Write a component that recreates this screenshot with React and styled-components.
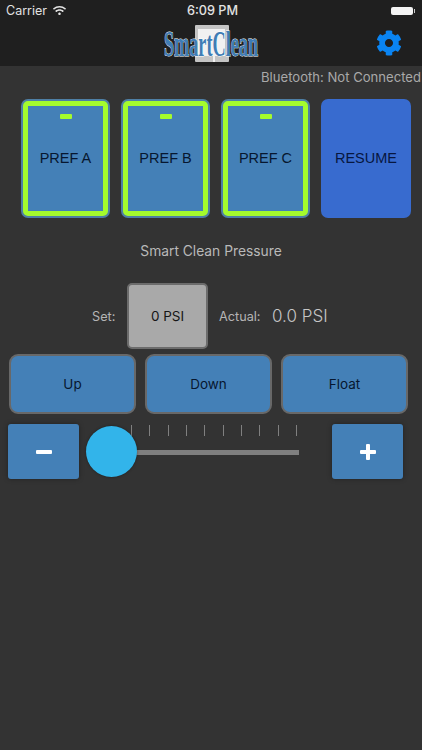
import React from "react";
import styled, { createGlobalStyle } from "styled-components";
import { FaCog, FaWifi } from "react-icons/fa";

const prefs = ["PREF A", "PREF B", "PREF C"];
const modes = ["Up", "Down", "Float"];
const ticks = Array.from({ length: 10 });

const Logo = () => (
  <LogoMark width="100" height="44" viewBox="0 0 100 44">
    <rect x="34" y="3" width="34" height="37" rx="1" fill="#c4c4c4" />
    <rect x="37" y="7" width="27" height="27" fill="#f1f1f1" />
    <rect x="52" y="28" width="2" height="12" fill="#f1f1f1" />
    <text
      x="3"
      y="34"
      textLength="94"
      lengthAdjust="spacingAndGlyphs"
      fontFamily="'Liberation Serif', serif"
      fontSize="36"
      fontWeight="700"
      fill="#3f7db5"
      stroke="#ffffff"
      strokeWidth="0.9"
      paintOrder="stroke"
    >
      SmartClean
    </text>
  </LogoMark>
);

const App = () => {
  return (
    <>
      <GlobalStyle />
      <Screen>
        <Header>
          <StatusBar>
            <Carrier>
              Carrier
              <FaWifi size={13} />
            </Carrier>
            <Clock>6:09 PM</Clock>
            <Battery />
          </StatusBar>
          <NavBar>
            <Logo />
            <GearButton>
              <FaCog size={26} />
            </GearButton>
          </NavBar>
        </Header>

        <Bluetooth>Bluetooth: Not Connected</Bluetooth>

        <PrefRow>
          {prefs.map((name) => (
            <PrefCard key={name}>
              <PrefInner>
                <PrefLed />
                {name}
              </PrefInner>
            </PrefCard>
          ))}
          <ResumeCard>RESUME</ResumeCard>
        </PrefRow>

        <Title>Smart Clean Pressure</Title>

        <PressureRow>
          <SetLabel>Set:</SetLabel>
          <SetBox>0 PSI</SetBox>
          <ActualLabel>Actual:</ActualLabel>
          <ActualValue>0.0 PSI</ActualValue>
        </PressureRow>

        <ModeRow>
          {modes.map((mode) => (
            <ModeButton key={mode}>{mode}</ModeButton>
          ))}
        </ModeRow>

        <SliderRow>
          <StepButton>
            <Minus />
          </StepButton>
          <Slider>
            <Ticks>
              {ticks.map((_, i) => (
                <Tick key={i} />
              ))}
            </Ticks>
            <Track />
            <Knob />
          </Slider>
          <StepButton>
            <Plus />
          </StepButton>
        </SliderRow>
      </Screen>
    </>
  );
};

export default App;

const GlobalStyle = createGlobalStyle`
  html, body {
    margin: 0;
    padding: 0;
    background: #333333;
  }
`;

const Screen = styled.div`
  width: 422px;
  height: 750px;
  overflow: hidden;
  background: #333333;
  font-family: "Liberation Sans", Arial, sans-serif;
`;

const Header = styled.div`
  height: 66px;
  background: #1f1f1f;
`;

const StatusBar = styled.div`
  height: 21px;
  padding: 0 6px;
  display: grid;
  grid-template-columns: 1fr auto 1fr;
  align-items: center;
  color: #e2e2e2;
  font-family: Inter, sans-serif;
  font-size: 12.5px;
`;

const Carrier = styled.div`
  display: flex;
  align-items: center;
  gap: 6px;
`;

const Clock = styled.div`
  padding-left: 3px;
  font-weight: 500;
  font-size: 12.7px;
`;

const Battery = styled.div`
  justify-self: end;
  width: 22px;
  height: 8px;
  margin-right: 3px;
  background: #f4f4f4;
  border-radius: 2px;
  position: relative;

  &::after {
    content: "";
    position: absolute;
    right: -2px;
    top: 2px;
    width: 1px;
    height: 4px;
    background: #cccccc;
  }
`;

const NavBar = styled.div`
  height: 45px;
  position: relative;
  display: flex;
  justify-content: center;
  align-items: flex-start;
  padding: 1px 0 0 0;
  box-sizing: border-box;
`;

const LogoMark = styled.svg`
  overflow: visible;
`;

const GearButton = styled.div`
  position: absolute;
  right: 20px;
  top: 9px;
  color: #0a84f2;
  line-height: 0;
`;

const Bluetooth = styled.div`
  height: 20px;
  padding: 1px 1px 0 0;
  box-sizing: border-box;
  text-align: right;
  color: #a9a9a9;
  font-family: Inter, sans-serif;
  font-size: 13.1px;
  line-height: 20px;
`;

const PrefRow = styled.div`
  display: flex;
  gap: 11px;
  margin-top: 13px;
  padding-left: 21px;
`;

const PrefCard = styled.div`
  width: 89px;
  height: 119px;
  box-sizing: border-box;
  border: 2px solid #4e7fa5;
  border-radius: 7px;
  background: #a4fb2e;
  padding: 5px;
`;

const PrefInner = styled.div`
  height: 100%;
  box-sizing: border-box;
  padding-bottom: 2px;
  background: #4480b7;
  display: flex;
  flex-direction: column;
  align-items: center;
  justify-content: center;
  position: relative;
  color: #07172f;
  font-size: 14.5px;
`;

const PrefLed = styled.div`
  position: absolute;
  top: 8px;
  left: 50%;
  margin-left: -6px;
  width: 12px;
  height: 5px;
  background: #a4fb2e;
  border-radius: 1px;
`;

const ResumeCard = styled.div`
  width: 90px;
  height: 119px;
  box-sizing: border-box;
  padding-bottom: 2px;
  border-radius: 7px;
  background: #386bcf;
  display: flex;
  align-items: center;
  justify-content: center;
  color: #07173f;
  font-size: 14.5px;
`;

const Title = styled.div`
  margin-top: 25px;
  text-align: center;
  color: #b9b9b9;
  font-family: Inter, sans-serif;
  font-size: 13.8px;
  line-height: 17px;
`;

const PressureRow = styled.div`
  margin-top: 23px;
  padding-left: 92px;
  display: flex;
  align-items: center;
  font-family: Inter, sans-serif;
`;

const SetLabel = styled.span`
  width: 35px;
  color: #b5b5b5;
  font-size: 12.7px;
`;

const SetBox = styled.div`
  width: 81px;
  height: 66px;
  box-sizing: border-box;
  border: 2px solid #6c6c6c;
  border-radius: 5px;
  background: #a9a9a9;
  display: flex;
  align-items: center;
  justify-content: center;
  color: #161616;
  font-size: 13.5px;
`;

const ActualLabel = styled.span`
  margin-left: 11px;
  width: 53px;
  color: #b5b5b5;
  font-size: 12.7px;
`;

const ActualValue = styled.span`
  color: #c6c6c6;
  font-size: 17px;
  font-weight: 300;
`;

const ModeRow = styled.div`
  margin-top: 5px;
  padding-left: 9px;
  display: flex;
  gap: 9px;
`;

const ModeButton = styled.div`
  width: 127px;
  height: 60px;
  box-sizing: border-box;
  border: 2px solid #686868;
  border-radius: 9px;
  background: #4480b7;
  display: flex;
  align-items: center;
  justify-content: center;
  color: #07172f;
  font-family: Inter, sans-serif;
  font-size: 13.5px;
`;

const SliderRow = styled.div`
  margin-top: 10px;
  padding-left: 8px;
  display: flex;
`;

const StepButton = styled.div`
  width: 71px;
  height: 55px;
  flex: none;
  border-radius: 3px;
  background: #4480b7;
  box-shadow: 0 0 5px rgba(0, 0, 0, 0.35);
  display: flex;
  align-items: center;
  justify-content: center;
`;

const Minus = styled.div`
  width: 16px;
  height: 4px;
  background: #ffffff;
  border-radius: 1px;
`;

const Plus = styled(Minus)`
  position: relative;

  &::after {
    content: "";
    position: absolute;
    left: 6px;
    top: -6px;
    width: 4px;
    height: 16px;
    background: #ffffff;
    border-radius: 1px;
  }
`;

const Slider = styled.div`
  width: 253px;
  height: 55px;
  position: relative;
  padding-left: 52px;
  box-sizing: border-box;
`;

const Ticks = styled.div`
  width: 166px;
  height: 12px;
  margin-top: 1px;
  display: flex;
  justify-content: space-between;
`;

const Tick = styled.div`
  width: 1px;
  height: 11px;
  background: #808080;
`;

const Track = styled.div`
  width: 180px;
  height: 5px;
  margin-top: 13px;
  margin-left: -12px;
  background: #7f7f7f;
`;

const Knob = styled.div`
  position: absolute;
  left: 7px;
  top: 2px;
  width: 51px;
  height: 51px;
  border-radius: 50%;
  background: #32b4ea;
  box-shadow: 0 0 3px rgba(0, 0, 0, 0.4);
`;
